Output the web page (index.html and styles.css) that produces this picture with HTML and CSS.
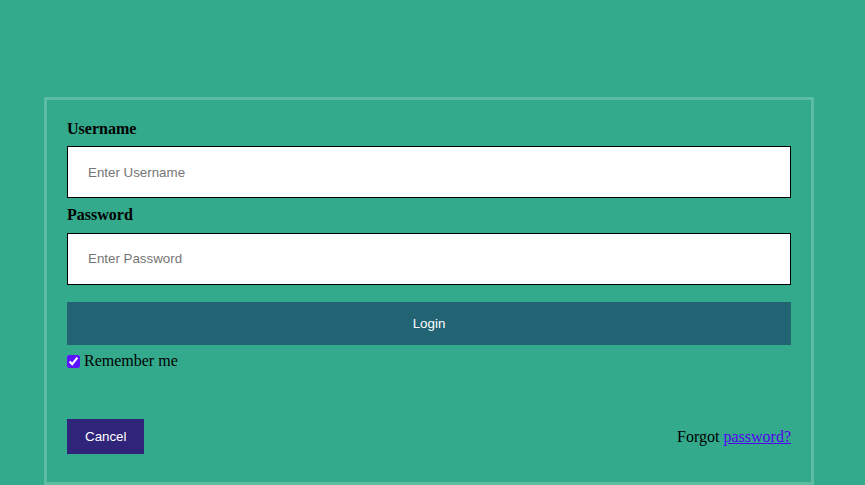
FILE: index.html
```html
<!DOCTYPE html>
<html>
<head>
<meta charset="utf-8">
<link rel="stylesheet" href="styles.css">
</head>
<body>
<form class="login-form">
  <div class="fields">
    <label class="field-label" for="uname">Username</label>
    <input class="text-input" id="uname" type="text" placeholder="Enter Username">
    <label class="field-label" for="psw">Password</label>
    <input class="text-input" id="psw" type="password" placeholder="Enter Password">
    <button class="login-btn" type="button">Login</button>
    <label class="remember"><input class="remember-box" type="checkbox" checked> Remember me</label>
  </div>
  <div class="footer">
    <button class="cancel-btn" type="button">Cancel</button>
    <span class="forgot">Forgot <a href="#">password?</a></span>
  </div>
</form>
</body>
</html>
```
FILE: styles.css
```css
html, body {
  margin: 0;
  padding: 0;
}
body {
  background: #33aa8c;
  font-family: "Liberation Serif", "Times New Roman", serif;
  font-size: 16px;
  padding: 97px 51px 0 44px;
  height: 485px;
  box-sizing: border-box;
  overflow: hidden;
}
.login-form {
  border: 3px solid #5dbda3;
  padding: 20px;
  height: 388px;
  box-sizing: border-box;
  display: flex;
  flex-direction: column;
}
.fields {
  display: flex;
  flex-direction: column;
}
.field-label {
  font-weight: bold;
  line-height: 18.4px;
  color: #000;
}
.text-input {
  height: 52px;
  box-sizing: border-box;
  border: 1px solid #000;
  padding: 0 20px;
  margin: 8px 0;
  font-family: "Liberation Sans", Arial, sans-serif;
  font-size: 13.33px;
  background: #fff;
}
.text-input::placeholder {
  color: #757575;
}
.login-btn {
  margin-top: 9px;
  height: 43px;
  border: none;
  background: #226473;
  color: #fff;
  font-family: "Liberation Sans", Arial, sans-serif;
  font-size: 13.33px;
}
.remember {
  margin-top: 7px;
  line-height: 18.4px;
  display: flex;
  align-items: center;
  color: #000;
}
.remember-box {
  margin: 0 4px 0 0;
  width: 13px;
  height: 13px;
  accent-color: #5a14ff;
}
.footer {
  margin-top: auto;
  display: flex;
  justify-content: space-between;
  align-items: flex-start;
}
.cancel-btn {
  margin: 8px 0;
  padding: 10px 18px;
  width: 77px;
  border: none;
  background: #2f2479;
  color: #fff;
  font-family: "Liberation Sans", Arial, sans-serif;
  font-size: 13.33px;
  line-height: 15px;
}
.forgot {
  padding-top: 17px;
  line-height: 18.4px;
  color: #000;
}
.forgot a {
  color: #5500ee;
}
```
